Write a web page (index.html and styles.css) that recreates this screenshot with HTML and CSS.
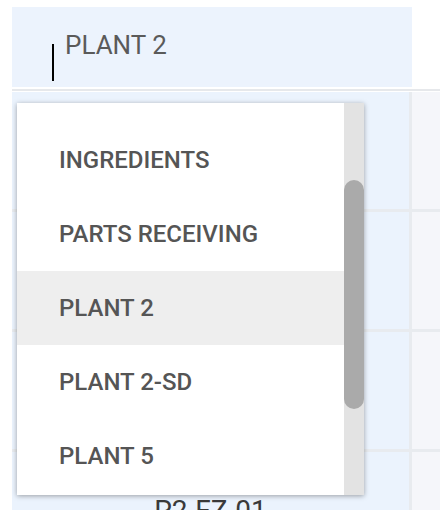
FILE: index.html
```html
<!DOCTYPE html>
<html>
<head>
<meta charset="utf-8">
<link rel="stylesheet" href="styles.css">
</head>
<body>
<div class="page">
  <div class="field">
    <span class="field-text">PLANT 2</span>
    <span class="cursor"></span>
  </div>
  <div class="divider"></div>
  <div class="grid">
    <div class="cell c1"></div><div class="cell c2"></div>
    <div class="cell c1"></div><div class="cell c2"></div>
    <div class="cell c1"></div><div class="cell c2"></div>
    <div class="cell c1"><span class="cell-text">P2-FZ-01</span></div><div class="cell c2"></div>
  </div>
  <div class="menu">
    <div class="menu-list">
      <div class="item">INGREDIENTS</div>
      <div class="item">PARTS RECEIVING</div>
      <div class="item active">PLANT 2</div>
      <div class="item">PLANT 2-SD</div>
      <div class="item">PLANT 5</div>
    </div>
    <div class="scrollbar"><div class="thumb"></div></div>
  </div>
</div>
</body>
</html>
```
FILE: styles.css
```css
html, body {
  margin: 0;
  padding: 0;
  background: #ffffff;
  font-family: Roboto, "Liberation Sans", sans-serif;
  overflow: hidden;
}
.page {
  position: relative;
  padding: 7px 0 0 12px;
  width: 428px;
  height: 503px;
  overflow: hidden;
}
.field {
  position: relative;
  width: 347px;
  height: 57px;
  padding: 23px 0 0 53px;
  background: #ecf3fd;
  box-sizing: content-box;
}
.field-text {
  display: block;
  font-size: 26px;
  line-height: 30px;
  color: #5a5a5a;
}
.cursor {
  position: absolute;
  left: 40px;
  top: 37px;
  width: 2px;
  height: 37px;
  background: #000;
}
.divider {
  margin-top: 2px;
  height: 2px;
  background: #e6e8eb;
}
.grid {
  margin-top: 1px;
  display: grid;
  grid-template-columns: 397px 1fr;
  grid-auto-rows: 117px;
  gap: 3px;
  background: #e8ebef;
}
.cell {
  display: flex;
  align-items: center;
  justify-content: center;
}
.c1 { background: #ebf3fd; }
.c2 { background: #f5f6fa; }
.cell-text {
  font-size: 28px;
  font-weight: 400;
  color: #3a3a3a;
}
.menu {
  position: absolute;
  left: 17px;
  top: 103px;
  width: 347px;
  height: 392px;
  background: #fff;
  display: flex;
  box-shadow: 0 1px 5px rgba(0,0,0,0.35);
  overflow: hidden;
}
.menu-list {
  flex: 1;
  padding-top: 20px;
}
.item {
  height: 74px;
  display: flex;
  align-items: center;
  padding-left: 42px;
  font-size: 24px;
  font-weight: 500;
  color: #555;
}
.item.active { background: #eeeeee; }
.scrollbar {
  width: 20px;
  background: #e3e3e3;
  position: relative;
}
.thumb {
  position: absolute;
  left: 0;
  top: 77px;
  width: 20px;
  height: 229px;
  border-radius: 10px;
  background: #aaaaaa;
}
```
